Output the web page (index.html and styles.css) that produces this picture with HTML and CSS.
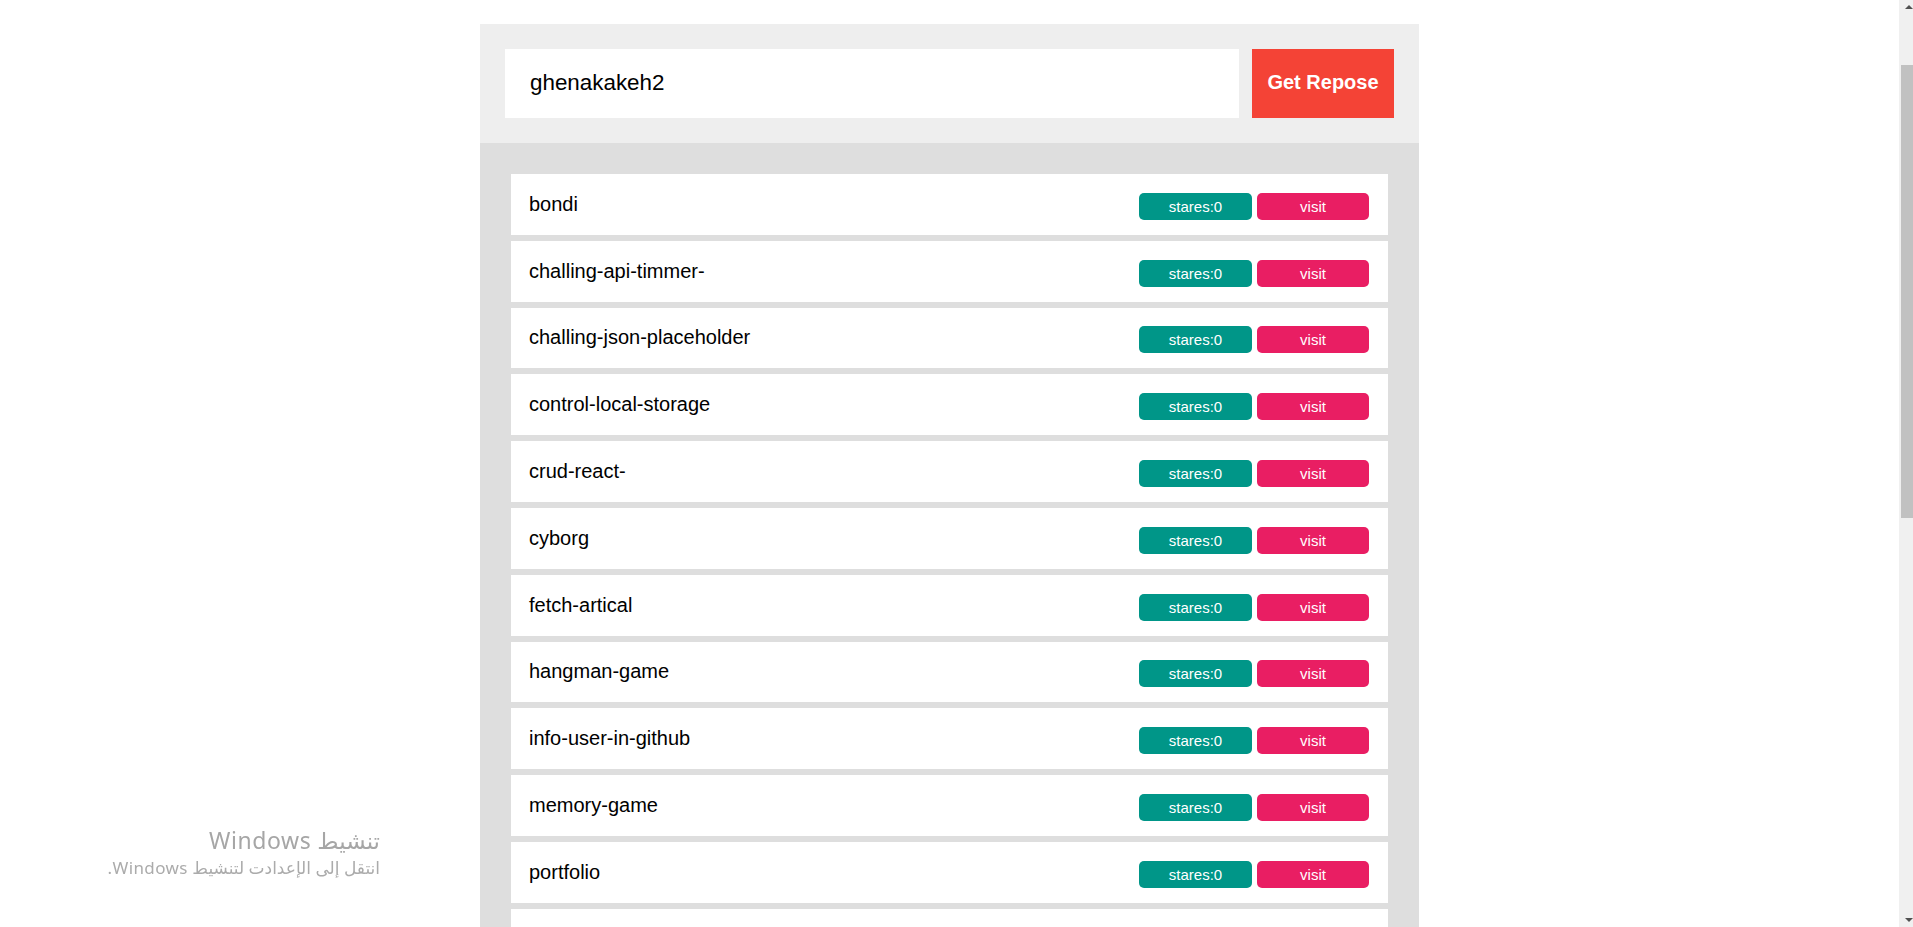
FILE: index.html
```html
<!DOCTYPE html>
<html lang="en">
<head>
<meta charset="utf-8">
<title>Get Repos</title>
<link rel="stylesheet" href="styles.css">
</head>
<body>
<div class="viewport">
  <div class="app">
    <div class="search">
      <input class="search-input" type="text" value="ghenakakeh2">
      <button class="get-btn">Get Repose</button>
    </div>
    <div class="repos">
      <div class="repo"><span class="repo-name">bondi</span><div class="repo-actions"><span class="stars">stares:0</span><a class="visit">visit</a></div></div>
      <div class="repo"><span class="repo-name">challing-api-timmer-</span><div class="repo-actions"><span class="stars">stares:0</span><a class="visit">visit</a></div></div>
      <div class="repo"><span class="repo-name">challing-json-placeholder</span><div class="repo-actions"><span class="stars">stares:0</span><a class="visit">visit</a></div></div>
      <div class="repo"><span class="repo-name">control-local-storage</span><div class="repo-actions"><span class="stars">stares:0</span><a class="visit">visit</a></div></div>
      <div class="repo"><span class="repo-name">crud-react-</span><div class="repo-actions"><span class="stars">stares:0</span><a class="visit">visit</a></div></div>
      <div class="repo"><span class="repo-name">cyborg</span><div class="repo-actions"><span class="stars">stares:0</span><a class="visit">visit</a></div></div>
      <div class="repo"><span class="repo-name">fetch-artical</span><div class="repo-actions"><span class="stars">stares:0</span><a class="visit">visit</a></div></div>
      <div class="repo"><span class="repo-name">hangman-game</span><div class="repo-actions"><span class="stars">stares:0</span><a class="visit">visit</a></div></div>
      <div class="repo"><span class="repo-name">info-user-in-github</span><div class="repo-actions"><span class="stars">stares:0</span><a class="visit">visit</a></div></div>
      <div class="repo"><span class="repo-name">memory-game</span><div class="repo-actions"><span class="stars">stares:0</span><a class="visit">visit</a></div></div>
      <div class="repo"><span class="repo-name">portfolio</span><div class="repo-actions"><span class="stars">stares:0</span><a class="visit">visit</a></div></div>
      <div class="repo"></div>
    </div>
  </div>
</div>
<div class="scrollbar">
  <div class="sb-btn"><span class="arrow-up"></span></div>
  <div class="sb-thumb"></div>
  <div class="sb-fill"></div>
  <div class="sb-btn"><span class="arrow-down"></span></div>
</div>
<div class="watermark">
  <div class="wm-title">تنشيط Windows</div>
  <div class="wm-sub">انتقل إلى الإعدادت لتنشيط Windows.</div>
</div>
</body>
</html>
```
FILE: styles.css
```css
html, body {
  margin: 0;
  height: 100%;
}

body {
  display: flex;
  overflow: hidden;
  background: #fff;
  font-family: "Liberation Sans", Arial, sans-serif;
}

.viewport {
  flex: 1;
  min-width: 0;
  height: 100%;
  box-sizing: border-box;
  padding-top: 24px;
  display: flex;
  justify-content: center;
  overflow: hidden;
}

.app {
  width: 939px;
  flex-shrink: 0;
  align-self: flex-start;
}

.search {
  background: #eeeeee;
  padding: 25px;
  display: flex;
  gap: 13px;
}

.search-input {
  flex: 1;
  min-width: 0;
  height: 69px;
  box-sizing: border-box;
  border: 0;
  outline: none;
  padding: 0 25px 2px 25px;
  margin: 0;
  font-family: "Liberation Sans", Arial, sans-serif;
  font-size: 22.4px;
  color: #000;
  background: #fff;
}

.get-btn {
  width: 142px;
  height: 69px;
  border: 0;
  padding: 0 0 2px 0;
  margin: 0;
  background: #f44336;
  color: #fff;
  font-family: "Liberation Sans", Arial, sans-serif;
  font-size: 20px;
  font-weight: bold;
}

.repos {
  background: #dedede;
  padding: 31px 31px 0 31px;
}

.repo {
  height: 60.8px;
  box-sizing: border-box;
  margin-bottom: 6px;
  background: #fff;
  display: flex;
  align-items: center;
  justify-content: space-between;
  padding: 0 19px 0 18px;
}

.repo-name {
  font-size: 20px;
  color: #000;
}

.repo-actions {
  display: flex;
  gap: 5px;
  margin-top: 4px;
}

.stars, .visit {
  height: 27px;
  border-radius: 5px;
  color: #fff;
  font-size: 15px;
  display: flex;
  align-items: center;
  justify-content: center;
}

.stars {
  width: 113px;
  background: #009688;
}

.visit {
  width: 112px;
  background: #e91e63;
}

.scrollbar {
  width: 14px;
  flex-shrink: 0;
  height: 100%;
  background: #f0f0f0;
  display: flex;
  flex-direction: column;
}

.sb-btn {
  height: 14px;
  display: flex;
  align-items: center;
  justify-content: flex-end;
}

.arrow-up {
  width: 0;
  height: 0;
  border-left: 4px solid transparent;
  border-right: 4px solid transparent;
  border-bottom: 4px solid #505050;
}

.arrow-down {
  width: 0;
  height: 0;
  border-left: 4px solid transparent;
  border-right: 4px solid transparent;
  border-top: 4px solid #505050;
}

.sb-thumb {
  margin-top: 51px;
  margin-left: 2px;
  height: 453px;
  background: #c1c1c1;
}

.sb-fill {
  flex: 1;
}

.watermark {
  position: fixed;
  left: 40px;
  top: 825px;
  width: 340px;
  direction: rtl;
  font-family: "Noto Sans", "DejaVu Sans", sans-serif;
  pointer-events: none;
}

.wm-title {
  font-size: 23px;
  line-height: 31px;
  color: #a6a6a6;
  letter-spacing: 0.6px;
}

.wm-sub {
  font-size: 17px;
  line-height: 24px;
  color: #ababab;
  letter-spacing: 0.4px;
}
```
